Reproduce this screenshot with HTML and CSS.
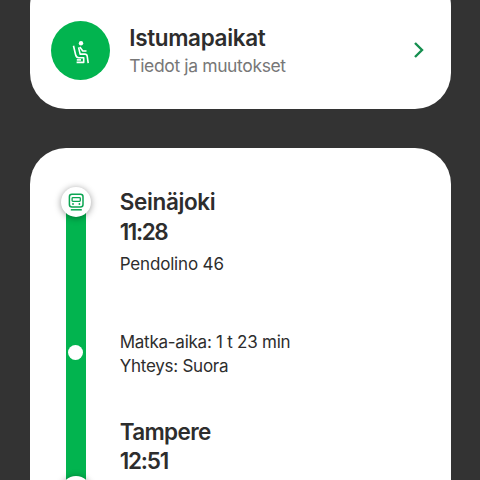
FILE: index.html
```html
<!DOCTYPE html>
<html lang="fi">
<head>
<meta charset="utf-8">
<title>Matka</title>
<link rel="stylesheet" href="styles.css">
</head>
<body>
<main class="screen">
  <a class="card seats">
    <span class="seat-badge">
      <svg width="59" height="59" viewBox="0 0 59 59" fill="none" stroke="#fff" stroke-width="1.6" stroke-linejoin="round">
        <circle cx="30" cy="22.2" r="2.2" fill="#fff" stroke="none"/>
        <path d="M22.5 24.8 24.6 33.8c.5 2.1 1.4 2.9 3.2 2.9h4.9v4.7h-7.1"/>
        <path d="M25.8 38.9h4.2"/>
        <path d="m27.6 26.4 1.5 6.7h4.7c1.6 0 2.2.6 2.4 2l1 7"/>
        <path d="m28.8 26 3 4h3.7"/>
      </svg>
    </span>
    <span class="seat-text">
      <span class="seat-title">Istumapaikat</span>
      <span class="seat-sub">Tiedot ja muutokset</span>
    </span>
    <svg class="chevron" width="12" height="18" viewBox="0 0 12 18" fill="none" stroke="#168f50" stroke-width="2.4"><path d="m2 2 7 7-7 7"/></svg>
  </a>
  <section class="card journey">
    <div class="rail">
      <span class="node">
        <svg width="30" height="30" viewBox="0 0 30 30" fill="none" stroke="#0ba552" stroke-width="1.5">
          <rect x="8.4" y="7.2" width="13.6" height="12.8" rx="2.5"/>
          <rect x="11.1" y="10.6" width="8.2" height="3.8" rx=".8" stroke-width="1.3"/>
          <path d="M9.8 22.8h11"/>
          <circle cx="12" cy="17" r=".9" fill="#0ba552" stroke="none"/><circle cx="18.4" cy="17" r=".9" fill="#0ba552" stroke="none"/>
        </svg>
      </span>
      <span class="dot"></span>
      <span class="node end"></span>
    </div>
    <div class="stops">
      <div class="stop">
        <div class="place">Seinäjoki</div>
        <div class="time">11:28</div>
        <div class="detail train">Pendolino 46</div>
      </div>
      <div class="summary">
        <div class="detail duration">Matka-aika: 1 t 23 min</div>
        <div class="detail link">Yhteys: Suora</div>
      </div>
      <div class="stop">
        <div class="place arrival">Tampere</div>
        <div class="time last">12:51</div>
      </div>
    </div>
  </section>
</main>
</body>
</html>
```
FILE: styles.css
```css
* { box-sizing: border-box; }
body { margin: 0; background: #333; color: #2d2d2d; font-family: Inter, "Liberation Sans", sans-serif; }
.screen { height: 480px; overflow: hidden; display: flex; flex-direction: column; gap: 39.5px; padding: 0 29.5px; }
.card { background: #fff; flex: none; border-radius: 36px; }
.seats { margin-top: -30px; height: 138.7px; display: flex; align-items: flex-start; padding: 50.5px 26px 0 21.5px; }
.seat-badge { width: 59px; height: 59px; border-radius: 50%; background: #02b44f; flex: none; }
.seat-badge svg { display: block; }
.seat-text { display: flex; flex-direction: column; margin: 3.5px 0 0 19.3px; flex: 1; white-space: nowrap; }
.seat-title { font-size: 22.5px; font-weight: 600; line-height: 28px; letter-spacing: -.35px; }
.seat-sub { font-size: 17.5px; line-height: 27px; letter-spacing: -.37px; color: #777; }
.chevron { margin-top: 20.5px; }
.journey { height: 380px; display: flex; padding-left: 36.2px; }
.rail { width: 20px; margin-top: 54px; height: 340px; background: #02b44f; position: relative; flex: none; }
.node { position: absolute; left: -5px; top: -15.2px; width: 30px; height: 30px; border-radius: 50%; background: #fff; box-shadow: 0 1px 7px rgba(0,0,0,.4); }
.node svg { display: block; }
.node.end { top: 273.7px; }
.dot { position: absolute; left: 2.5px; top: 142.5px; width: 15px; height: 15px; border-radius: 50%; background: #fff; }
.stops { margin-left: 34px; padding-top: 39.3px; white-space: nowrap; }
.place, .time { font-size: 22.5px; font-weight: 600; line-height: 29.5px; }
.place { letter-spacing: -.35px; }
.arrival { letter-spacing: -.65px; }
.time { letter-spacing: -1.4px; }
.last { letter-spacing: -1.2px; }
.detail { font-size: 17px; line-height: 24.5px; letter-spacing: -.25px; }
.train { margin-top: 5.5px; letter-spacing: -.17px; }
.summary { margin-top: 53.5px; margin-bottom: 38px; }
```
